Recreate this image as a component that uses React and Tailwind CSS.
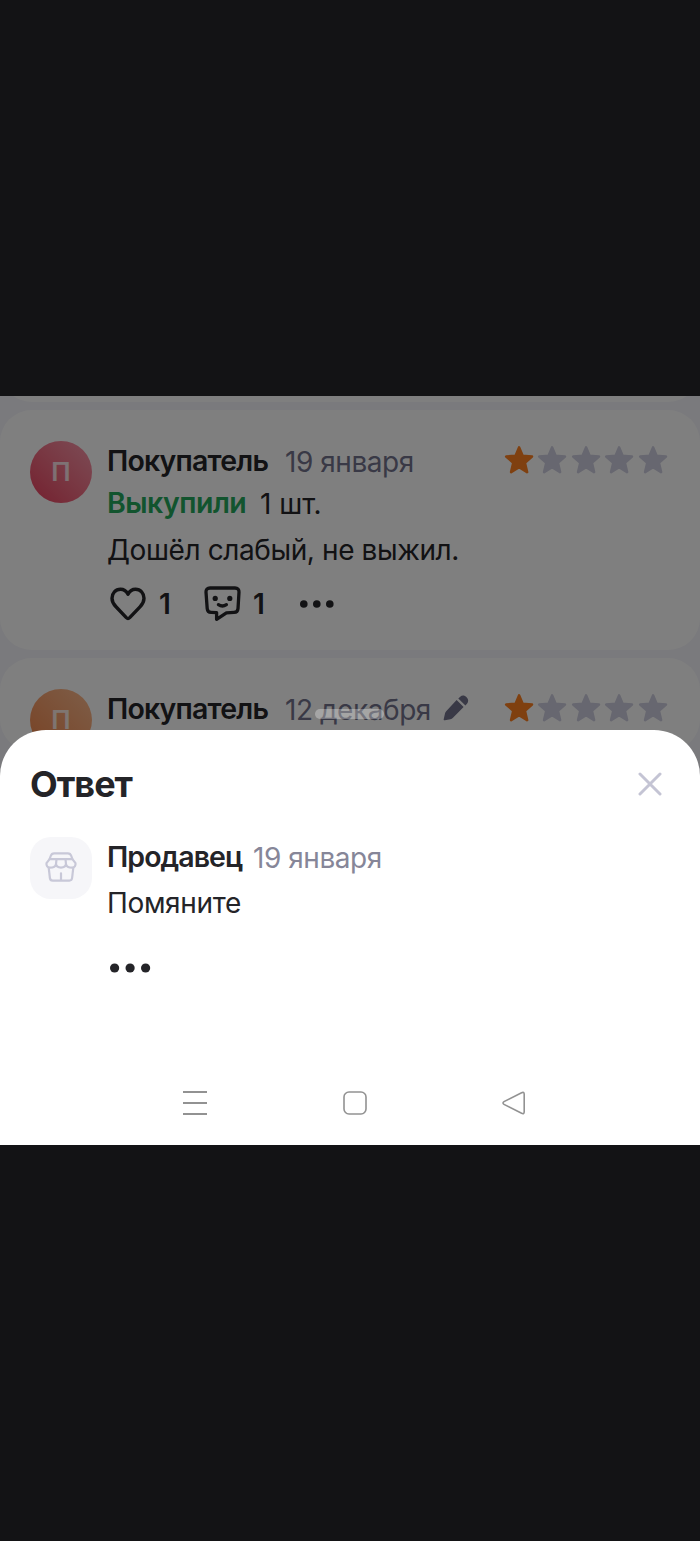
import React from 'react';

const Star = ({ active }) => (
  <svg width="33.4" height="30" viewBox="0 0 33.4 30" className={active ? 'text-[#ff8020]' : 'text-[#cfcfe0]'}>
    <path
      d="M15.1 2.4 L18.6 10.8 L28 11.5 L20.9 17.7 L23.1 27.1 L15.1 22.2 L7.1 27.1 L9.3 17.7 L2.2 11.5 L11.6 10.8 Z"
      fill="currentColor"
      stroke="currentColor"
      strokeWidth="2.6"
      strokeLinejoin="round"
    />
  </svg>
);

const Stars = () => (
  <div className="flex shrink-0 ml-auto mr-[29px] mb-[3px] h-[30px]">
    {[1, 2, 3, 4, 5].map((n) => (
      <Star key={n} active={n === 1} />
    ))}
  </div>
);

const Dots = ({ width, gap, r }) => (
  <svg width={width} height="12" viewBox={`0 0 ${width} 12`} fill="currentColor">
    <circle cx={r} cy="6" r={r} />
    <circle cx={r + gap} cy="6" r={r} />
    <circle cx={r + gap * 2} cy="6" r={r} />
  </svg>
);

const HeartIcon = () => (
  <svg width="36" height="34" viewBox="0 0 36 34" fill="none" stroke="currentColor" strokeWidth="3.4" strokeLinejoin="round">
    <path d="M18 7.2C16.3 4 13.5 2.2 10.5 2.2C5.5 2.2 2 6.2 2 11.2C2 14.5 3.5 17.2 6 19.8L16.3 30.6C17.4 31.7 18.6 31.7 19.7 30.6L30 19.8C32.5 17.2 34 14.5 34 11.2C34 6.2 30.5 2.2 25.5 2.2C22.5 2.2 19.7 4 18 7.2Z" />
  </svg>
);

const CommentIcon = () => (
  <svg width="37" height="36" viewBox="0 0 37 36" fill="none" stroke="currentColor" strokeWidth="3.3" strokeLinejoin="round" strokeLinecap="round">
    <path d="M6 2H31C33.7 2 35.2 3.7 35 6.2L34 22.6C33.8 25.1 32.4 26.3 30 26.4L22.4 26.8L12.6 33.3V26.6L7.2 26.4C4.8 26.3 3.4 25.1 3.2 22.6L2 6.2C1.8 3.7 3.3 2 6 2Z" />
    <path d="M14.4 18.7Q18.4 21.3 22.4 18.7" />
    <circle cx="11.2" cy="12.4" r="2.6" fill="currentColor" stroke="none" />
    <circle cx="25.8" cy="12.4" r="2.6" fill="currentColor" stroke="none" />
  </svg>
);

const PencilIcon = () => (
  <svg width="26" height="26" viewBox="0 0 26 26" fill="currentColor">
    <path d="M13.6 5L20.6 12L10 22.8C9.2 23.6 8.4 24 7.4 24.3L1.9 25.3C1 25.5 0.5 25 0.7 24.2L2 18.6C2.2 17.6 2.6 16.8 3.4 16Z" />
    <path d="M15.3 3.4L17.2 1.7C19.2 0 21.8 0.4 23.6 2.3C25.5 4.2 25.7 6.6 24.2 8.5L22.4 10.4Z" />
  </svg>
);

const ShopIcon = () => (
  <svg width="32" height="30" viewBox="0 0 32 30" fill="none" stroke="currentColor" strokeWidth="2.2" strokeLinejoin="round" strokeLinecap="round">
    <path d="M4.6 7.2L5.7 4C6.3 2.2 7.4 1.4 9.2 1.4H22.8C24.6 1.4 25.7 2.2 26.3 4L27.4 7.2" />
    <path d="M4.6 7.2H27.4L30.5 11.2C30.9 13.8 29.5 15.7 27 15.7C23.4 15.7 21.6 14.8 21 12.2C20.6 14.8 19 15.6 16 15.6C13 15.6 11.4 14.8 11 12.2C10.4 14.8 8.6 15.7 5 15.7C2.5 15.7 1.1 13.8 1.5 11.2Z" />
    <path d="M11.5 7.2L11 12.2M20.5 7.2L21 12.2" />
    <path d="M3.7 15.7L4.9 26C5.1 27.8 6 28.6 7.7 28.6H24.3C26 28.6 26.9 27.8 27.1 26L28.3 15.7M16 21.3V28" />
  </svg>
);

const Review = ({ avatar, date, edited, children }) => (
  <div className="flex bg-white rounded-[32px] pl-[30px] pt-[31px]">
    <div className={`flex shrink-0 items-center justify-center size-[62px] rounded-full text-white/80 text-[26px] font-semibold ${avatar}`}>
      П
    </div>
    <div className="flex-1 ml-[15px]">
      <div className="flex items-center h-[41px]">
        <span className="w-[178px] text-[28.5px] font-semibold tracking-[-0.8px]">Покупатель</span>
        <span className="text-[#72728c] tracking-[-0.45px]">{date}</span>
        {edited && (
          <span className="ml-[12px] mb-[3px] text-[#72728c]">
            <PencilIcon />
          </span>
        )}
        <Stars />
      </div>
      {children}
    </div>
  </div>
);

const Sheet = () => (
  <div className="absolute inset-x-0 top-[334px] bottom-0 flex flex-col bg-white rounded-t-[46px] text-[#242428]">
    <div className="flex items-center justify-between h-[107px] pl-[30px] pr-[38px]">
      <h2 className="text-[36px] font-bold tracking-[-1px]">Ответ</h2>
      <svg width="24" height="24" viewBox="0 0 24 24" stroke="#c4c4d4" strokeWidth="3" strokeLinecap="round">
        <path d="M2 2L22 22M22 2L2 22" />
      </svg>
    </div>
    <div className="flex pl-[30px]">
      <div className="flex items-center justify-center size-[62px] pb-[3px] pr-px rounded-[21px] bg-[#f6f6f9] text-[#c8c8d8]">
        <ShopIcon />
      </div>
      <div className="ml-[15px]">
        <div className="flex items-center h-[41px]">
          <span className="w-[146px] text-[28.5px] font-semibold tracking-[-0.95px]">Продавец</span>
          <span className="text-[#868698] tracking-[-0.45px]">19 января</span>
        </div>
        <p className="h-[51px] leading-[51px] tracking-[-0.35px]">Помяните</p>
        <div className="pt-[33px] pl-[3px]">
          <Dots width={42} gap={15.5} r={4.6} />
        </div>
      </div>
    </div>
    <div className="flex items-center mt-auto mb-[30px] h-6 text-[#929292]">
      <svg className="ml-[183px]" width="24" height="24" viewBox="0 0 24 24" stroke="currentColor" strokeWidth="2">
        <path d="M0 1H24M0 12H24M0 23H24" />
      </svg>
      <svg className="ml-[136px]" width="24" height="24" viewBox="0 0 24 24" fill="none" stroke="currentColor" strokeWidth="1.6">
        <rect x="1" y="1" width="22" height="22" rx="5" />
      </svg>
      <svg className="ml-[135px]" width="24" height="24" viewBox="0 0 24 24" fill="none" stroke="currentColor" strokeWidth="1.6">
        <path d="M19.6 1.7Q22.2 0.6 22.2 3.2V20.8Q22.2 23.4 19.6 22.3L2 13.4Q0 12 2 10.6Z" />
      </svg>
    </div>
  </div>
);

export default function App() {
  return (
    <div className="w-[700px] h-[1541px] pt-[396px] bg-[#131315]">
      <div className="relative h-[749px] overflow-hidden bg-[#f5f5fa] text-[28px] leading-none whitespace-nowrap text-[#242428] font-[Inter,'Liberation_Sans',sans-serif]">
        <div className="h-16 -mt-[58px] bg-white rounded-b-[32px]" />
        <div className="flex flex-col gap-2 pt-2">
          <Review avatar="bg-linear-to-tr from-[#e83c5e] to-[#f898ac]" date="19 января">
            <div className="flex items-center h-[43px]">
              <span className="w-[153px] text-[28.5px] font-semibold tracking-[-0.5px] text-[#24a85c]">Выкупили</span>
              <span>1 шт.</span>
            </div>
            <p className="h-[50px] leading-[50px] tracking-[-0.4px]">Дошёл слабый, не выжил.</p>
            <div className="flex items-center h-[58px] mb-[17px] pl-[3px] font-semibold">
              <HeartIcon />
              <span className="w-[58px] pl-[13px]">1</span>
              <CommentIcon />
              <span className="w-[59px] pl-[12px]">1</span>
              <Dots width={36} gap={13} r={3.8} />
            </div>
          </Review>
          <Review avatar="bg-linear-to-tr from-[#f08448] to-[#fcbc90]" date="12 декабря" edited />
        </div>
        <div className="absolute inset-0 bg-black/50" />
        <div className="absolute left-[315px] top-[313px] w-[69px] h-[10px] rounded-full bg-white/30" />
        <Sheet />
      </div>
    </div>
  );
}
